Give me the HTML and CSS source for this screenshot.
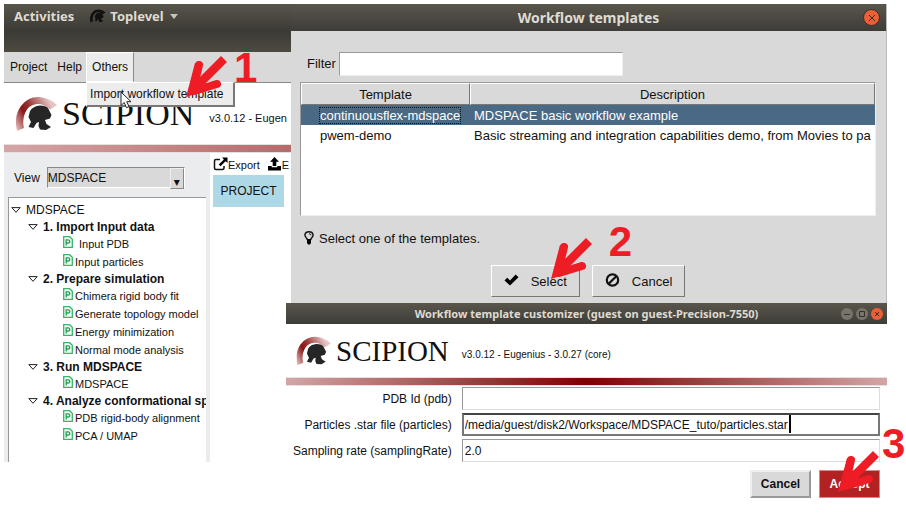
FILE: index.html
```html
<!DOCTYPE html>
<html lang="en">
<head>
<meta charset="utf-8">
<title>Scipion workflow templates</title>
<link rel="stylesheet" href="styles.css">
</head>
<body>
<svg class="defs" aria-hidden="true">
  <defs>
    <linearGradient id="crest" x1="0" y1="1" x2="1" y2=".5">
      <stop offset="0" stop-color="#ecd0d0"/><stop offset=".38" stop-color="#8a1515"/><stop offset=".55" stop-color="#963030"/><stop offset="1" stop-color="#e6c4c4"/>
    </linearGradient>
    <symbol id="helmet" viewBox="0 0 42 36">
      <path d="M14 15 Q17 10 24 9.500 Q30 9.500 32 12 L35.500 19 L34 22.500 L29 24 L30.500 28 L35 31 L30 34 L24 33.500 L22.500 30 L23 26 L20.500 27 L17.500 32 L12.500 31 L15 26 L12.500 21 Z"/>
    </symbol>
    <symbol id="crest-arc" viewBox="0 0 42 36">
      <path d="M1 35 Q-2.500 20 5 10 Q12 .5 23 1 Q33 1.500 41 9 L34 13.500 Q28 7.500 21 8 Q12 9 9 17 Q6 24 8 32 Z"/>
    </symbol>
    <symbol id="logo" viewBox="0 0 42 36">
      <use href="#crest-arc" fill="url(#crest)"/>
      <use href="#helmet" fill="#262626"/>
    </symbol>
    <symbol id="doc" viewBox="0 0 10 12">
      <path d="M.7 .7 H6.500 L9.300 3.300 V11.300 H.7 Z" fill="#f2fff6" stroke="#35b56a" stroke-width="1.300"/>
      <path d="M3.200 9.500 V3.800 H5 Q6.800 3.800 6.800 5.400 Q6.800 7 5 7 H3.500" fill="none" stroke="#279c58" stroke-width="1.300"/>
    </symbol>
    <symbol id="tri" viewBox="0 0 10 6"><path d="M.8 .6 H9.200 L5 5.300 Z" fill="#fff" stroke="#222"/></symbol>
    <symbol id="arrow" viewBox="0 0 50 50">
      <path d="M6 43 L15 9 L22 11 L19 24 L41 2 L47 8 L25 30 L37 26 L40 32 Z" fill="#ee1c25"/>
      <path d="M14 32 L19 11 M14 37 L37 30" stroke="#ee1c25" stroke-width="8" stroke-linecap="round"/>
    </symbol>
  </defs>
</svg>

<main class="desktop">
  <section class="project">
    <header class="topbar">
      <span>Activities</span>
      <svg class="app-icon"><use href="#crest-arc"/><use href="#helmet"/></svg>
      <span>Toplevel</span><i class="caret-down"></i>
    </header>
    <nav class="menubar">
      <button>Project</button><button>Help</button>
      <div class="menu-host">
        <button class="open">Others</button>
        <div class="menu"><button>Import workflow template</button></div>
        <svg class="pointer" viewBox="0 0 12 18"><path d="M1 1 V14.500 L4.200 11.500 L6.500 16.700 L9 15.600 L6.700 10.700 H11 Z" fill="#fff" stroke="#222"/></svg>
        <svg class="arrow arrow-1"><use href="#arrow"/></svg>
        <span class="step step-1">1</span>
      </div>
    </nav>
    <div class="brand">
      <svg class="logo"><use href="#logo"/></svg>
      <span class="name">SCIPION</span>
      <span class="version">v3.0.12 - Eugen</span>
    </div>
    <div class="rule rule-start"></div>
    <div class="body">
      <aside class="side">
        <div class="view">
          <label for="view">View</label>
          <span class="select"><select id="view"><option>MDSPACE</option></select></span>
        </div>
        <ul class="tree">
          <li class="root"><svg class="tri"><use href="#tri"/></svg>MDSPACE</li>
          <li class="group"><svg class="tri"><use href="#tri"/></svg>1. Import Input data</li>
          <li class="leaf gap"><svg class="doc"><use href="#doc"/></svg>Input PDB</li>
          <li class="leaf"><svg class="doc"><use href="#doc"/></svg>Input particles</li>
          <li class="group"><svg class="tri"><use href="#tri"/></svg>2. Prepare simulation</li>
          <li class="leaf"><svg class="doc"><use href="#doc"/></svg>Chimera rigid body fit</li>
          <li class="leaf"><svg class="doc"><use href="#doc"/></svg>Generate topology model</li>
          <li class="leaf"><svg class="doc"><use href="#doc"/></svg>Energy minimization</li>
          <li class="leaf"><svg class="doc"><use href="#doc"/></svg>Normal mode analysis</li>
          <li class="group"><svg class="tri"><use href="#tri"/></svg>3. Run MDSPACE</li>
          <li class="leaf"><svg class="doc"><use href="#doc"/></svg>MDSPACE</li>
          <li class="group"><svg class="tri"><use href="#tri"/></svg>4. Analyze conformational spa</li>
          <li class="leaf"><svg class="doc"><use href="#doc"/></svg>PDB rigid-body alignment</li>
          <li class="leaf"><svg class="doc"><use href="#doc"/></svg>PCA / UMAP</li>
        </ul>
      </aside>
      <div class="canvas">
        <div class="tools">
          <button><svg class="tool" viewBox="0 0 15 14"><path d="M7 2.500 H3 Q1.500 2.500 1.500 4 V11 Q1.500 12.500 3 12.500 H9.500 Q11 12.500 11 11 V9" fill="none" stroke="#111" stroke-width="1.500"/><path d="M9 .5 H14.500 V6 L12.600 4.200 L7.500 9.300 L5.800 7.600 L10.900 2.500 Z"/></svg>Export</button>
          <button><svg class="tool" viewBox="0 0 15 14"><path d="M7.500 0 L12 4.700 H9.300 V9 H5.700 V4.700 H3 Z M1 9 H4.700 V10.300 H10.300 V9 H14 V13.500 H1 Z"/></svg>E</button>
        </div>
        <div class="node">PROJECT</div>
      </div>
    </div>
  </section>

  <div class="dialogs">
    <section class="templates">
      <header class="titlebar"><h1>Workflow templates</h1>
        <div class="winbtns"><button class="close" aria-label="Close"><svg viewBox="0 0 10 10"><path d="M2 2 L8 8 M8 2 L2 8"/></svg></button></div>
      </header>
      <div class="content">
        <div class="filter"><label for="filter">Filter</label><input id="filter" type="text"></div>
        <div class="list">
          <table>
            <thead><tr><th class="c1">Template</th><th>Description</th></tr></thead>
            <tbody>
              <tr class="on"><td><span class="focus">continuousflex-mdspace</span></td><td><div>MDSPACE basic workflow example</div></td></tr>
              <tr><td><span>pwem-demo</span></td><td><div>Basic streaming and integration capabilities demo, from Movies to pa</div></td></tr>
            </tbody>
          </table>
        </div>
        <p class="hint"><svg viewBox="0 0 10 14"><path d="M3.300 9 Q3.200 7.500 2 6.500 Q.8 5 .9 3.700 Q1.500 .8 5 .8 Q8.500 .8 9.100 3.700 Q9.200 5 8 6.500 Q6.800 7.500 6.700 9" fill="none" stroke="#111" stroke-width="1.400"/><path d="M3 8 H7 V12 L6 13.500 H4 L3 12 Z"/><path d="M5 2.700 Q6.800 2.800 7 4.300" fill="none" stroke="#111"/></svg>Select one of the templates.</p>
        <div class="actions">
          <div class="host">
            <button><svg viewBox="0 0 15 14"><path d="M.5 7.500 L3.200 4.800 L6 7.500 L11.700 1.500 L14.500 4.200 L6 12.500 Z"/></svg>Select</button>
            <svg class="arrow arrow-2"><use href="#arrow"/></svg>
            <span class="step step-2">2</span>
          </div>
          <button><svg viewBox="0 0 15 14"><circle cx="7.500" cy="7" r="5.700" fill="none" stroke="#111" stroke-width="2.200"/><path d="M3.700 10.800 L11.300 3.200" stroke="#111" stroke-width="2.200"/></svg>Cancel</button>
        </div>
      </div>
    </section>

    <section class="custom">
      <header class="titlebar small"><h2>Workflow template customizer (guest on guest-Precision-7550)</h2>
        <div class="winbtns">
          <button aria-label="Minimize"><svg viewBox="0 0 10 10"><path d="M2 5.500 H8"/></svg></button>
          <button aria-label="Maximize"><svg viewBox="0 0 10 10"><path d="M2.500 2.500 H7.500 V7.500 H2.500 Z"/></svg></button>
          <button class="close" aria-label="Close"><svg viewBox="0 0 10 10"><path d="M3 3 L7 7 M7 3 L3 7"/></svg></button>
        </div>
      </header>
      <div class="brand compact">
        <svg class="logo"><use href="#logo"/></svg>
        <span class="name">SCIPION</span>
        <span class="version">v3.0.12 - Eugenius - 3.0.27 (core)</span>
      </div>
      <div class="rule"></div>
      <form>
        <label for="pdb">PDB Id (pdb)</label>
        <div class="field"><input id="pdb" type="text"></div>
        <label for="star">Particles .star file (particles)</label>
        <div class="field active"><input id="star" type="text" value="/media/guest/disk2/Workspace/MDSPACE_tuto/particles.star"><i class="text-caret"></i></div>
        <label for="rate">Sampling rate (samplingRate)</label>
        <div class="field"><input id="rate" type="text" value="2.0"></div>
        <div class="submit">
          <button type="button">Cancel</button>
          <div class="host">
            <button type="button" class="accept">Accept</button>
            <svg class="arrow arrow-3"><use href="#arrow"/></svg>
            <span class="step step-3">3</span>
          </div>
        </div>
      </form>
    </section>
  </div>
</main>
</body>
</html>
```

FILE: styles.css
```css
* { box-sizing: border-box; }
body {
  margin: 0;
  background: #fff;
  color: #111;
  font: 12px/18px "Liberation Sans", Arial, sans-serif;
}
button, input, select { font: inherit; color: inherit; margin: 0; }
button { padding: 0; border: 0; background: none; }
.defs { position: absolute; width: 0; height: 0; }
.desktop { display: flex; align-items: flex-start; padding: 4px 19px 0 4px; }
.project { flex: 0 0 287px; overflow: hidden; }
.dialogs { flex: 1; min-width: 0; }

.topbar {
  display: flex;
  align-items: center;
  height: 48px;
  padding: 0 10px 24px;
  background: linear-gradient(#59554b, #3b3a35 56%, #4d4a41);
  color: #dfdbd2;
  font: bold 13px/24px "Noto Sans", sans-serif;
}
.app-icon { width: 16px; height: 14px; margin: 0 4px 0 16px; fill: #111; }
.caret-down { margin-left: 6px; border: 4px solid transparent; border-top: 5px solid #c8c4bb; border-bottom: 0; }

.menubar { display: flex; height: 31px; padding-left: 6px; background: #d9d9d9; border-bottom: 1px solid #888; }
.menubar > button { margin-right: 10px; }
.menu-host { position: relative; margin-left: -6px; }
.menu-host .open {
  height: 30px;
  padding: 0 5px;
  background: #ececec;
  border: 1px solid #fff;
  border-right-color: #888;
}
.menu {
  position: absolute;
  top: 30px;
  left: 0;
  width: 149px;
  padding: 2px 3px;
  background: #ececec;
  border: 1px solid #fff;
  border-right: 2px solid #777;
  border-bottom: 2px solid #777;
  line-height: 18px;
}
.menu button { display: block; white-space: nowrap; }
.pointer { position: absolute; left: 34px; top: 39px; width: 12px; height: 18px; }

.brand { display: flex; align-items: center; height: 61px; padding-left: 12px; background: #fff; white-space: nowrap; }
.brand .logo { flex: none; width: 42px; height: 36px; }
.brand .name { margin-left: 4px; color: #111; font: 34px/40px "Liberation Serif", serif; }
.brand .version { margin-left: 15px; padding-top: 8px; font-size: 11px; }
.brand.compact { height: 53px; padding-left: 10px; }
.compact .logo { width: 36px; height: 30px; }
.compact .name { margin-left: 4px; font-size: 29px; }
.compact .version { margin-left: 13px; font-size: 10px; }
.rule { height: 9px; border: 1px solid #e6e0e0; border-width: 1px 0; background: linear-gradient(90deg, #d3a6a6, #7c0000 50%, #d3a6a6); }
.rule-start { background: linear-gradient(90deg, #d5a5a5, #b66b6b); }

.body { display: flex; height: 309px; }
.side { flex: 0 0 206px; min-width: 0; display: flex; flex-direction: column; background: #ebeced; padding: 14px 4px 0; }
.view { display: flex; align-items: center; gap: 7px; padding-left: 6px; }
.select { position: relative; width: 138px; height: 21px; border: 1px solid #888; border-right-color: #fff; border-bottom-color: #fff; }
.select select { display: block; appearance: none; width: 100%; height: 100%; padding: 0; border: 0; border-radius: 0; background: #d9d9d9; }
.select::after {
  content: "\25BE";
  position: absolute;
  top: 0;
  right: 0;
  width: 12px;
  height: 19px;
  border: 1px solid #eee;
  border-right-color: #888;
  border-bottom-color: #888;
  background: #d9d9d9;
  font: 12px/26px "DejaVu Sans", sans-serif;
  text-align: center;
  pointer-events: none;
}
.tree {
  flex: 1;
  margin: 9px 0 0;
  padding: 3px 0 0;
  list-style: none;
  overflow: hidden;
  white-space: nowrap;
  background: #fff;
  border: 1px solid #999;
  border-width: 1px 0 0 1px;
}
.tree li { display: flex; align-items: center; height: 18px; }
.tree .root { padding-left: 2px; }
.tree .group { height: 16px; padding-left: 19px; font-weight: bold; }
.tree .leaf { padding-left: 54px; font-size: 11px; }
.tri { width: 10px; height: 6px; margin-right: 5px; flex: none; }
.doc { width: 10px; height: 12px; margin: 0 2px 4px 0; flex: none; }
.gap .doc { margin-right: 6px; }
.canvas { flex: 1; min-width: 0; padding: 3px 0 0 3px; overflow: hidden; }
.tools { display: flex; gap: 7px; height: 18px; }
.tools button { display: flex; align-items: center; flex: none; font-size: 11px; }
.tool { width: 15px; height: 14px; margin-bottom: 3px; }
.node { width: 71px; margin-top: 1px; background: #add8e6; line-height: 32px; text-align: center; }

.titlebar {
  position: relative;
  display: flex;
  align-items: center;
  justify-content: center;
  height: 27px;
  background: linear-gradient(#5a564c, #3d3c37);
  color: #dfdbd2;
}
.titlebar h1, .titlebar h2 { margin: 0; font: bold 14px/24px "Noto Sans", sans-serif; white-space: nowrap; }
.titlebar.small { height: 21px; }
.titlebar h2 { font-size: 11px; line-height: 20px; }
.winbtns { position: absolute; right: 6px; display: flex; gap: 3px; }
.small .winbtns { right: 4px; }
.winbtns button { display: grid; place-items: center; width: 12px; height: 12px; border-radius: 50%; background: #77746c; }
.winbtns .close { background: #ec5f36; }
.winbtns svg { width: 10px; height: 10px; fill: none; stroke: #3a2f28; }
.templates .close { width: 17px; height: 17px; border: 1px solid #302f2b; }

.templates { background: #d9d9d9; font-size: 13px; border-right: 1px solid #bbb; }
.templates .content { padding: 21px 10px 6px 9px; }
.filter { display: flex; align-items: center; gap: 3px; padding-left: 7px; }
.filter input { flex: 0 0 284px; height: 24px; border: 1px solid #999; border-right-color: #eee; border-bottom-color: #eee; background: #fff; }
.list { height: 134px; margin-top: 6px; background: #fff; border: 1px solid #999; border-right-color: #eee; border-bottom-color: #eee; }
table { width: 100%; table-layout: fixed; border-collapse: separate; border-spacing: 0; }
th { height: 22px; padding: 1px 0 0; background: #d9d9d9; border: 1px solid #fff; border-right-color: #777; border-bottom-color: #777; font-weight: normal; }
.c1 { width: 169px; }
td { height: 20px; padding: 2px 0 0; white-space: nowrap; }
td:first-child { padding-left: 19px; }
td:last-child { padding: 2px 4px 0; }
td div { overflow: hidden; }
.on { background: #4a6984; color: #fff; }
.focus { outline: 1px dotted #111; }
.hint { display: flex; align-items: center; gap: 5px; margin: 14px 0 17px 4px; }
.hint svg { width: 10px; height: 14px; margin-bottom: 3px; }
.actions { display: flex; justify-content: center; gap: 12px; }
.actions button { display: flex; align-items: center; gap: 12px; height: 32px; padding: 2px 12px 0; border: 1px solid #fff; border-right-color: #777; border-bottom-color: #777; }
.actions button svg { width: 15px; height: 14px; margin-bottom: 4px; }
.host { position: relative; }

.custom { position: relative; margin-left: -5px; background: #fff; }
form { display: grid; grid-template-columns: max-content 1fr; align-items: center; gap: 3px 10px; padding: 1px 7px 0 7px; }
form label { text-align: right; }
.field { position: relative; }
.field input { display: block; width: 100%; height: 23px; padding: 0 2px; border: 1px solid #ddd; border-top-color: #999; border-left-color: #999; border-radius: 0; background: #fff; }
.field.active input { border: 2px solid #777; border-top-color: #444; padding: 0 1px; }
.text-caret { position: absolute; left: 327px; top: 2px; width: 2px; height: 18px; background: #000; }
.submit { grid-column: 1 / -1; display: flex; justify-content: flex-end; gap: 8px; margin-top: 5px; }
.submit button { width: 61px; height: 28px; border: 2px solid #eee; border-right-color: #999; border-bottom-color: #999; background: #d9d9d9; font-weight: bold; }
.submit .accept { background: #b22222; border: 1px solid #d88; color: #fff; }

.arrow { position: absolute; width: 50px; height: 50px; pointer-events: none; }
.step { position: absolute; color: #ee1c25; font: bold 42px/42px "Liberation Sans", Arial, sans-serif; pointer-events: none; }
.arrow-1 { left: 94px; top: 2px; }
.step-1 { left: 148px; top: -5px; }
.arrow-2 { left: 54px; top: -29px; }
.step-2 { left: 118px; top: -44px; }
.arrow-3 { left: 13px; top: -21px; }
.step-3 { left: 63px; top: -47px; }
```
